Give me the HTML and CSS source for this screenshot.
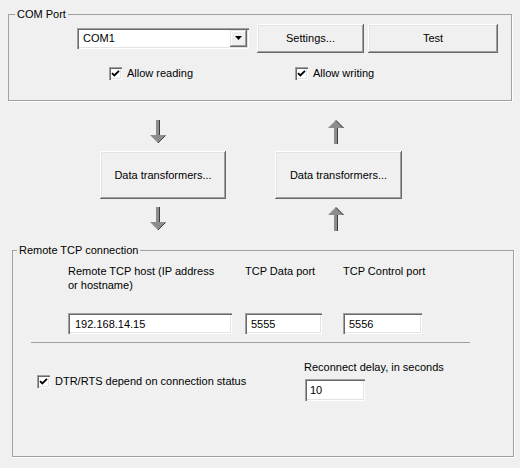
FILE: index.html
```html
<!DOCTYPE html>
<html>
<head>
<meta charset="utf-8">
<link rel="stylesheet" href="styles.css">
</head>
<body>
<fieldset class="group group-com">
  <legend class="legend legend-com">COM Port</legend>
  <div class="row-port">
    <div class="combo">
      <span class="combo-text">COM1</span>
      <span class="combo-btn"><svg width="7" height="4" viewBox="0 0 7 4"><path d="M0 0H7L3.5 4Z" fill="#000"/></svg></span>
    </div>
    <button class="btn btn-settings">Settings...</button>
    <button class="btn btn-test">Test</button>
  </div>
  <div class="row-allow">
    <label class="check check-read"><span class="box"><svg width="9" height="9" viewBox="0 0 9 9"><path d="M1 4.2L3.3 6.5L8 1.8" fill="none" stroke="#000" stroke-width="1.8"/></svg></span>Allow reading</label>
    <label class="check"><span class="box"><svg width="9" height="9" viewBox="0 0 9 9"><path d="M1 4.2L3.3 6.5L8 1.8" fill="none" stroke="#000" stroke-width="1.8"/></svg></span>Allow writing</label>
  </div>
</fieldset>

<div class="flow">
  <div class="flow-col flow-col-in">
    <svg class="arrow" width="16" height="24" viewBox="0 0 16 24"><rect x="6" y="0" width="3" height="16" fill="#8c8c8c"/><rect x="9" y="0" width="1" height="16" fill="#3c3c3c"/><path d="M0 15H16L8 23Z" fill="#8c8c8c"/><path d="M15.5 15.5L8 23" stroke="#3c3c3c" stroke-width="1"/></svg>
    <button class="btn btn-flow">Data transformers...</button>
    <svg class="arrow arrow-2" width="16" height="24" viewBox="0 0 16 24"><rect x="6" y="0" width="3" height="16" fill="#8c8c8c"/><rect x="9" y="0" width="1" height="16" fill="#3c3c3c"/><path d="M0 15H16L8 23Z" fill="#8c8c8c"/><path d="M15.5 15.5L8 23" stroke="#3c3c3c" stroke-width="1"/></svg>
  </div>
  <div class="flow-col flow-col-out">
    <svg class="arrow" width="16" height="24" viewBox="0 0 16 24"><path d="M8 0L16 8H0Z" fill="#8c8c8c"/><path d="M8 0.5L15.5 8" stroke="#3c3c3c" stroke-width="1"/><rect x="6" y="8" width="3" height="16" fill="#8c8c8c"/><rect x="9" y="8" width="1" height="16" fill="#3c3c3c"/></svg>
    <button class="btn btn-flow btn-flow-out">Data transformers...</button>
    <svg class="arrow arrow-2" width="16" height="24" viewBox="0 0 16 24"><path d="M8 0L16 8H0Z" fill="#8c8c8c"/><path d="M8 0.5L15.5 8" stroke="#3c3c3c" stroke-width="1"/><rect x="6" y="8" width="3" height="16" fill="#8c8c8c"/><rect x="9" y="8" width="1" height="16" fill="#3c3c3c"/></svg>
  </div>
</div>

<fieldset class="group group-tcp">
  <legend class="legend legend-tcp">Remote TCP connection</legend>
  <div class="tcp-grid">
    <div class="tcp-label">Remote TCP host (IP address<br>or hostname)</div>
    <div class="tcp-label">TCP Data port</div>
    <div class="tcp-label">TCP Control port</div>
    <input class="field field-host" type="text" value="192.168.14.15">
    <input class="field field-port" type="text" value="5555">
    <input class="field field-ctrl" type="text" value="5556">
  </div>
  <div class="sep"></div>
  <div class="bottom-row">
    <label class="check check-dtr"><span class="box"><svg width="9" height="9" viewBox="0 0 9 9"><path d="M1 4.2L3.3 6.5L8 1.8" fill="none" stroke="#000" stroke-width="1.8"/></svg></span>DTR/RTS depend on connection status</label>
    <div class="delay">
      <div class="delay-label">Reconnect delay, in seconds</div>
      <input class="field field-delay" type="text" value="10">
    </div>
  </div>
</fieldset>
</body>
</html>
```

FILE: styles.css
```css
html, body {
  margin: 0;
  padding: 0;
}
body {
  width: 520px;
  height: 468px;
  overflow: hidden;
  background: #f0f0f0;
  color: #000;
  font-family: "Liberation Sans", Arial, sans-serif;
  font-size: 11px;
  line-height: 13px;
}

.group {
  min-width: 0;
  padding: 0;
  border: 1px solid #a0a0a0;
  box-shadow: 1px 1px 0 #fff;
}
.group-com {
  margin: 8px 8px 0 8px;
  padding: 3px 0 20px 0;
}
.group-tcp {
  margin: 13px 6px 0 12px;
  padding: 7px 0 55px 0;
}
.legend {
  padding: 0 2px;
  line-height: 13px;
  height: 13px;
}
.legend-com { margin-left: 6px; }
.legend-tcp { margin-left: 4px; }

/* COM port row */
.row-port {
  display: flex;
  align-items: center;
  padding-left: 68px;
  height: 29px;
}
.combo {
  width: 172px;
  height: 21px;
  box-sizing: border-box;
  background: #fff;
  display: flex;
  align-items: center;
  justify-content: space-between;
  padding: 2px;
  box-shadow: inset 1px 1px 0 #a0a0a0, inset 2px 2px 0 #696969, inset -1px -1px 0 #fff, inset -2px -2px 0 #e3e3e3;
  margin-top: -1px;
}
.combo-text {
  padding-left: 4px;
}
.combo-btn {
  width: 17px;
  height: 17px;
  box-sizing: border-box;
  background: #f0f0f0;
  display: flex;
  align-items: center;
  justify-content: center;
  box-shadow: inset -1px -1px 0 #696969, inset 1px 1px 0 #e3e3e3, inset -2px -2px 0 #a0a0a0, inset 2px 2px 0 #fff;
}

.btn {
  font: inherit;
  color: #000;
  background: #f0f0f0;
  border: 0;
  padding: 0;
  margin: 0;
  box-shadow: inset -1px -1px 0 #696969, inset 1px 1px 0 #fff, inset -2px -2px 0 #a0a0a0, inset 2px 2px 0 #e3e3e3;
}
.btn-settings {
  width: 107px;
  height: 29px;
  margin-left: 8px;
}
.btn-test {
  width: 130px;
  height: 29px;
  margin-left: 4px;
}

.row-allow {
  display: flex;
  margin-top: 14px;
  padding-left: 100px;
  height: 13px;
}
.check {
  display: flex;
  align-items: center;
  height: 13px;
  line-height: 13px;
  white-space: nowrap;
}
.check-read {
  width: 186px;
}
.box {
  width: 13px;
  height: 13px;
  box-sizing: border-box;
  background: #fff;
  margin-right: 5px;
  display: flex;
  align-items: center;
  justify-content: center;
  box-shadow: inset 1px 1px 0 #a0a0a0, inset 2px 2px 0 #696969, inset -1px -1px 0 #fff, inset -2px -2px 0 #e3e3e3;
}

/* data flow */
.flow {
  display: flex;
  padding-left: 100px;
  margin-top: 19px;
}
.flow-col {
  display: flex;
  flex-direction: column;
  align-items: flex-start;
}
.flow-col-in {
  width: 126px;
}
.flow-col-out {
  width: 127px;
  margin-left: 49px;
}
.flow-col-in .arrow { margin-left: 50px; }
.flow-col-out .arrow { margin-left: 53px; }
.arrow { display: block; }
.btn-flow {
  width: 126px;
  height: 48px;
  margin-top: 7px;
}
.btn-flow-out {
  width: 127px;
}
.arrow-2 {
  margin-top: 8px;
}

/* TCP group */
.tcp-grid {
  display: grid;
  grid-template-columns: 177px 98px 79px;
  grid-template-rows: 49px 21px;
  padding-left: 55px;
}
.tcp-label {
  line-height: 14px;
  white-space: nowrap;
}
.field {
  font: inherit;
  color: #000;
  border: 0;
  margin: 0;
  height: 21px;
  box-sizing: border-box;
  padding: 2px 4px 2px 7px;
  background: #fff;
  outline: none;
  box-shadow: inset 1px 1px 0 #a0a0a0, inset 2px 2px 0 #696969, inset -1px -1px 0 #fff, inset -2px -2px 0 #e3e3e3;
}
.field-host { width: 164px; }
.field-port { width: 77px; padding-left: 6px; }
.field-ctrl { width: 79px; padding-left: 6px; }

.sep {
  height: 1px;
  background: #a0a0a0;
  margin: 8px 0 0 18px;
  width: 439px;
}

.bottom-row {
  display: flex;
  align-items: flex-start;
  margin-top: 17px;
  padding-left: 24px;
}
.check-dtr {
  width: 267px;
  margin-top: 15px;
}
.delay-label {
  line-height: 14px;
}
.field-delay {
  width: 60px;
  height: 22px;
  margin: 5px 0 0 1px;
  padding-left: 5px;
}
```
